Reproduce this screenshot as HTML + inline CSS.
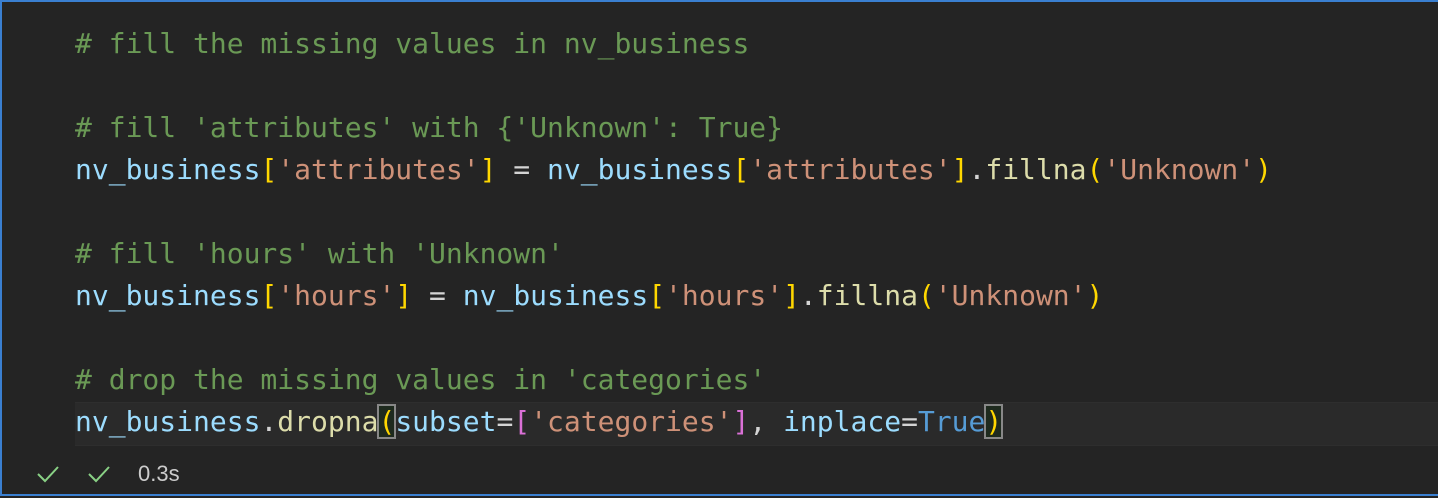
<!DOCTYPE html>
<html><head><style>
html,body{margin:0;padding:0;background:#242424;}
.wrap{position:relative;width:1436px;height:492px;border-top:2px solid #3a7fd0;border-left:2px solid #3a7fd0;border-bottom:2px solid #3a7fd0;background:#242424;overflow:hidden;}
.code{position:absolute;left:73px;top:21px;font-family:"DejaVu Sans Mono","Liberation Mono",monospace;font-size:28px;line-height:42px;white-space:pre;color:#d4d4d4;}
.hl{position:absolute;left:73px;right:0;top:400px;height:42px;background:#2a2a2a;border-top:1px solid #2e2e2e;border-bottom:1px solid #2e2e2e;}
.c{color:#6a9955}.v{color:#9cdcfe}.s{color:#ce9178}.f{color:#dcdcaa}.g{color:#ffd700}.p{color:#da70d6}.k{color:#569cd6}
.bm{outline:2px solid #888;outline-offset:-1px;background:#1e2a1e}
.foot{position:absolute;top:458px;left:0;width:400px;height:30px;font-family:"Liberation Sans",sans-serif;font-size:22px;color:#cccccc;}
</style></head><body><div class="wrap">
<div class="hl"></div>
<div class="code"><span class="c"># fill the missing values in nv_business</span>

<span class="c"># fill 'attributes' with {'Unknown': True}</span>
<span class="v">nv_business</span><span class="g">[</span><span class="s">'attributes'</span><span class="g">]</span> = <span class="v">nv_business</span><span class="g">[</span><span class="s">'attributes'</span><span class="g">]</span>.<span class="f">fillna</span><span class="g">(</span><span class="s">'Unknown'</span><span class="g">)</span>

<span class="c"># fill 'hours' with 'Unknown'</span>
<span class="v">nv_business</span><span class="g">[</span><span class="s">'hours'</span><span class="g">]</span> = <span class="v">nv_business</span><span class="g">[</span><span class="s">'hours'</span><span class="g">]</span>.<span class="f">fillna</span><span class="g">(</span><span class="s">'Unknown'</span><span class="g">)</span>

<span class="c"># drop the missing values in 'categories'</span>
<span class="v">nv_business</span>.<span class="f">dropna</span><span class="g bm">(</span><span class="v">subset</span>=<span class="p">[</span><span class="s">'categories'</span><span class="p">]</span>, <span class="v">inplace</span>=<span class="k">True</span><span class="g bm">)</span></div>
<div class="foot">
<svg style="position:absolute;left:34px;top:4px" width="24" height="20"><path d="M2 10 L9 17 L22 3" stroke="#89d185" stroke-width="2" fill="none"/></svg>
<svg style="position:absolute;left:85px;top:4px" width="24" height="20"><path d="M2 10 L9 17 L22 3" stroke="#89d185" stroke-width="2" fill="none"/></svg>
<span style="position:absolute;left:136px;top:1px">0.3s</span>
</div>
</div></body></html>
